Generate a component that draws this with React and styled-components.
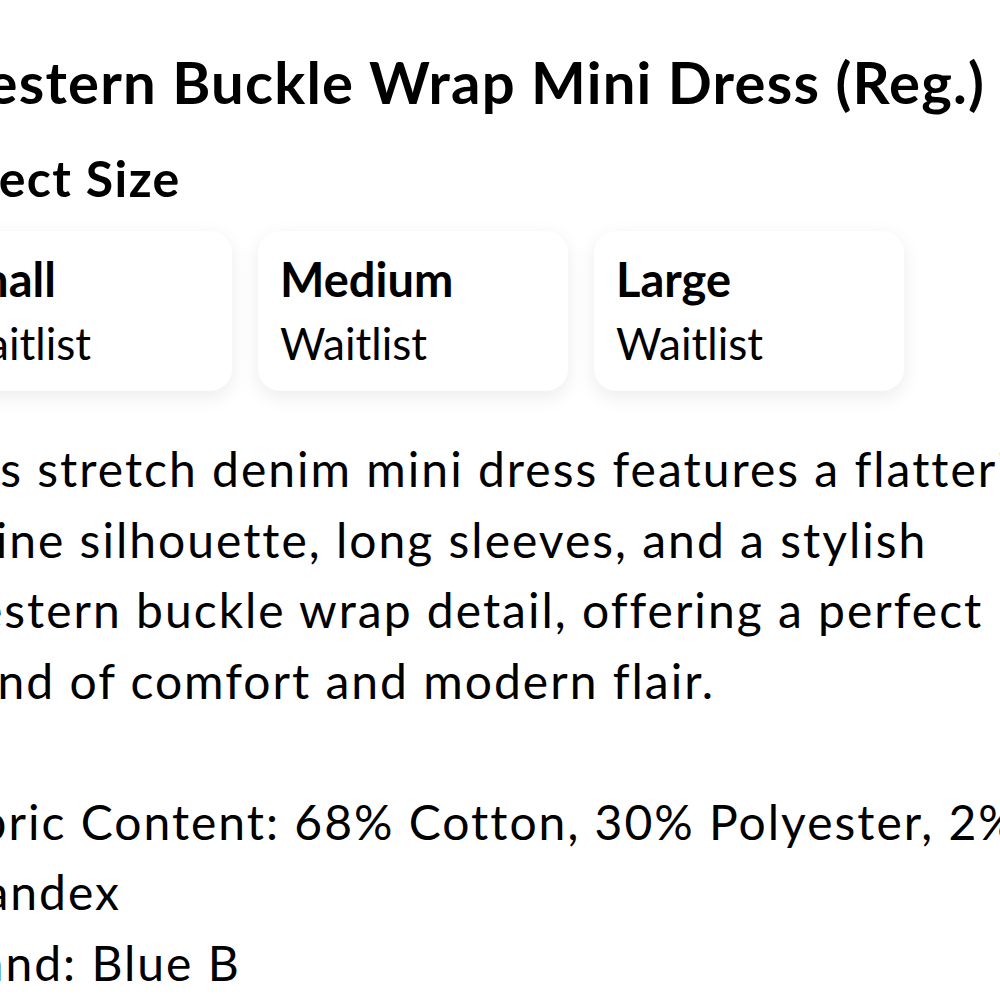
import React, { useState } from "react";
import styled, { createGlobalStyle } from "styled-components";

const GlobalStyle = createGlobalStyle`
    html, body {
        margin: 0;
        padding: 0;
        background: #fff;
    }
    body {
        font-family: "Lato", "Noto Sans", sans-serif;
        color: #000;
        -webkit-font-smoothing: antialiased;
    }
`;

const sizes = [
    { id: "small", label: "Small", status: "Waitlist" },
    { id: "medium", label: "Medium", status: "Waitlist" },
    { id: "large", label: "Large", status: "Waitlist" },
];

export default function App() {
    const [selected, setSelected] = useState(null);

    return (
        <Page>
            <GlobalStyle />
            <Content>
                <Title>Western Buckle Wrap Mini Dress (Reg.)</Title>
                <SectionHeading>Select Size</SectionHeading>
                <SizeRow>
                    {sizes.map((size) => (
                        <SizeCard
                            key={size.id}
                            $active={selected === size.id}
                            onClick={() => setSelected(size.id)}
                        >
                            <SizeName>{size.label}</SizeName>
                            <SizeStatus>{size.status}</SizeStatus>
                        </SizeCard>
                    ))}
                </SizeRow>
                <Description>
                    This stretch denim mini dress features a flattering A-line
                    silhouette, long sleeves, and a stylish Western buckle wrap
                    detail, offering a perfect blend of comfort and modern flair.
                </Description>
                <Description>
                    Fabric Content: 68% Cotton, 30% Polyester, 2% Spandex
                    <br />
                    Brand: Blue B
                </Description>
            </Content>
        </Page>
    );
}

const Page = styled.div`
    width: 1000px;
    height: 1000px;
    overflow: hidden;
    background: #fff;
`;

const Content = styled.div`
    width: 1145px;
    margin-left: -72px;
    padding-top: 42px;
`;

const Title = styled.h1`
    margin: 0;
    font-size: 58px;
    line-height: 80px;
    font-weight: 700;
    letter-spacing: 1.2px;
    white-space: nowrap;
`;

const SectionHeading = styled.h2`
    margin: 21px 0 0;
    font-size: 50px;
    line-height: 70px;
    font-weight: 700;
    letter-spacing: 1.4px;
`;

const SizeRow = styled.div`
    display: flex;
    gap: 26px;
    margin: 18px 0 0 -6px;
`;

const SizeCard = styled.button`
    flex: 0 0 310px;
    height: 160px;
    padding: 0 22px;
    display: flex;
    flex-direction: column;
    justify-content: center;
    align-items: flex-start;
    gap: 2px;
    background: #fff;
    border: ${(p) => (p.$active ? "2px solid #000" : "0")};
    border-radius: 22px;
    box-shadow: 0 6px 20px rgba(0, 0, 0, 0.08);
    font-family: inherit;
    color: #000;
    cursor: pointer;
    text-align: left;
`;

const SizeName = styled.span`
    font-size: 47px;
    line-height: 62px;
    font-weight: 700;
`;

const SizeStatus = styled.span`
    font-size: 44px;
    line-height: 62px;
    font-weight: 400;
`;

const Description = styled.p`
    margin: 43px 0 0;
    font-size: 48px;
    line-height: 70.5px;
    font-weight: 400;
    letter-spacing: 2px;

    & + & {
        margin-top: 70.5px;
    }
`;
